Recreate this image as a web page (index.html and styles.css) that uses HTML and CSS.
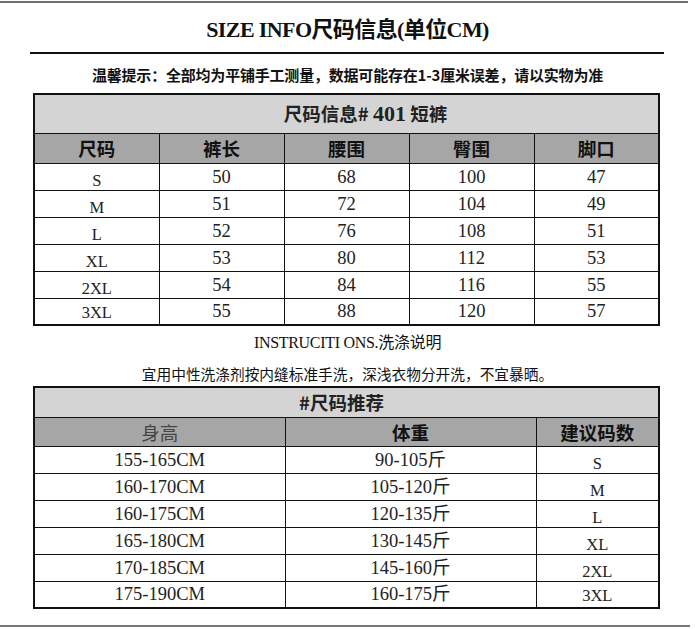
FILE: index.html
```html
<!DOCTYPE html>
<html lang="zh">
<head>
<meta charset="utf-8">
<title>SIZE INFO</title>
<link rel="stylesheet" href="styles.css">
</head>
<body>
<div class="topline"></div>
<h1 class="title">SIZE INFO尺码信息(单位CM)</h1>
<div class="rule"></div>
<p class="warning">温馨提示：全部均为平铺手工测量，数据可能存在1-3厘米误差，请以实物为准</p>

<table class="grid grid-size">
  <colgroup><col><col><col><col><col></colgroup>
  <tr class="row-caption"><td colspan="5" class="caption caption-size">尺码信息# <span class="num">401</span> 短裤</td></tr>
  <tr class="row-head">
    <td class="head">尺码</td><td class="head">裤长</td><td class="head">腰围</td><td class="head">臀围</td><td class="head">脚口</td>
  </tr>
  <tr class="row-data"><td class="label">S</td><td>50</td><td>68</td><td>100</td><td>47</td></tr>
  <tr class="row-data"><td class="label">M</td><td>51</td><td>72</td><td>104</td><td>49</td></tr>
  <tr class="row-data"><td class="label">L</td><td>52</td><td>76</td><td>108</td><td>51</td></tr>
  <tr class="row-data"><td class="label">XL</td><td>53</td><td>80</td><td>112</td><td>53</td></tr>
  <tr class="row-data"><td class="label">2XL</td><td>54</td><td>84</td><td>116</td><td>55</td></tr>
  <tr class="row-data"><td class="label label-up">3XL</td><td>55</td><td>88</td><td>120</td><td>57</td></tr>
</table>

<p class="instr">INSTRUCITI ONS.洗涤说明</p>
<p class="wash">宜用中性洗涤剂按内缝标准手洗，深浅衣物分开洗，不宜暴晒。</p>

<table class="grid grid-rec">
  <colgroup><col class="c-wide"><col class="c-wide"><col class="c-narrow"></colgroup>
  <tr class="row-caption2"><td colspan="3" class="caption caption-rec">#尺码推荐</td></tr>
  <tr class="row-head2">
    <td class="head head-light">身高</td><td class="head">体重</td><td class="head">建议码数</td>
  </tr>
  <tr class="row-data"><td>155-165CM</td><td>90-105斤</td><td class="label">S</td></tr>
  <tr class="row-data"><td>160-170CM</td><td>105-120斤</td><td class="label">M</td></tr>
  <tr class="row-data"><td>160-175CM</td><td>120-135斤</td><td class="label">L</td></tr>
  <tr class="row-data"><td>165-180CM</td><td>130-145斤</td><td class="label">XL</td></tr>
  <tr class="row-data"><td>170-185CM</td><td>145-160斤</td><td class="label">2XL</td></tr>
  <tr class="row-data"><td>175-190CM</td><td>160-175斤</td><td class="label label-up">3XL</td></tr>
</table>

<div class="bottomline"></div>
</body>
</html>
```

FILE: styles.css
```css
html, body {
  margin: 0;
  padding: 0;
  background: #ffffff;
}
body {
  width: 695px;
  height: 629px;
  overflow: hidden;
  font-family: "Liberation Serif", "Noto Sans CJK SC", serif;
  color: #000;
}
.topline {
  height: 2px;
  margin: 1px 7px 0 0;
  background: #6e6e6e;
}
.title {
  margin: 14px 0 0 0;
  font-size: 22px;
  line-height: 26px;
  font-weight: bold;
  text-align: center;
  letter-spacing: -0.6px;
  color: #111;
}
.rule {
  height: 2px;
  margin: 9px 31px 0 30px;
  background: #111;
}
.warning {
  margin: 11px 0 0 0;
  font-family: "Noto Sans CJK SC", sans-serif;
  font-size: 15px;
  line-height: 20px;
  font-weight: bold;
  text-align: center;
  letter-spacing: -0.2px;
  color: #111;
}
.grid {
  margin-left: 33px;
  border-collapse: collapse;
  table-layout: fixed;
  border: 2px solid #111;
}
.grid td {
  box-sizing: border-box;
  border: 1px solid #111;
  padding: 0;
  text-align: center;
  vertical-align: middle;
  font-size: 18.5px;
  line-height: 20px;
  color: #222;
}
.grid-size {
  width: 627px;
  margin-top: 8px;
}
.grid-rec {
  width: 625px;
  margin-top: 2px;
}
.c-wide { width: 251px; }
.c-narrow { width: 123px; }

.row-caption td { height: 39px; }
.row-head td { height: 30px; }
.row-caption2 td { height: 30px; }
.row-head2 td { height: 29px; }
.row-data td { height: 27px; }

.caption {
  background: #d4d4d4;
  font-family: "Noto Sans CJK SC", sans-serif;
  font-weight: bold;
  font-size: 19px;
  color: #111;
}
.caption .num {
  font-family: "Liberation Serif", serif;
  font-size: 22px;
}
.grid td.caption-size { padding-left: 38px; }
.grid td.caption-rec { padding-right: 10px; }
.grid td.head {
  background: #a6a6a6;
  font-family: "Noto Sans CJK SC", sans-serif;
  font-weight: bold;
  font-size: 18.5px;
  color: #111;
}
.grid td.head-light {
  font-weight: normal;
  color: #444;
}
.grid td.label {
  font-size: 16.5px;
  padding-top: 9px;
  line-height: 16px;
}
.grid td.label-up {
  padding-top: 4px;
}
.instr {
  margin: 7px 0 0 0;
  font-size: 16px;
  line-height: 20px;
  text-align: center;
  color: #111;
  letter-spacing: -0.3px;
}
.wash {
  margin: 11px 0 0 0;
  font-family: "Noto Sans CJK SC", sans-serif;
  font-size: 14.7px;
  line-height: 20px;
  text-align: center;
  color: #111;
}
.bottomline {
  height: 2px;
  margin: 16px 5px 0 0;
  background: #777;
}
```
